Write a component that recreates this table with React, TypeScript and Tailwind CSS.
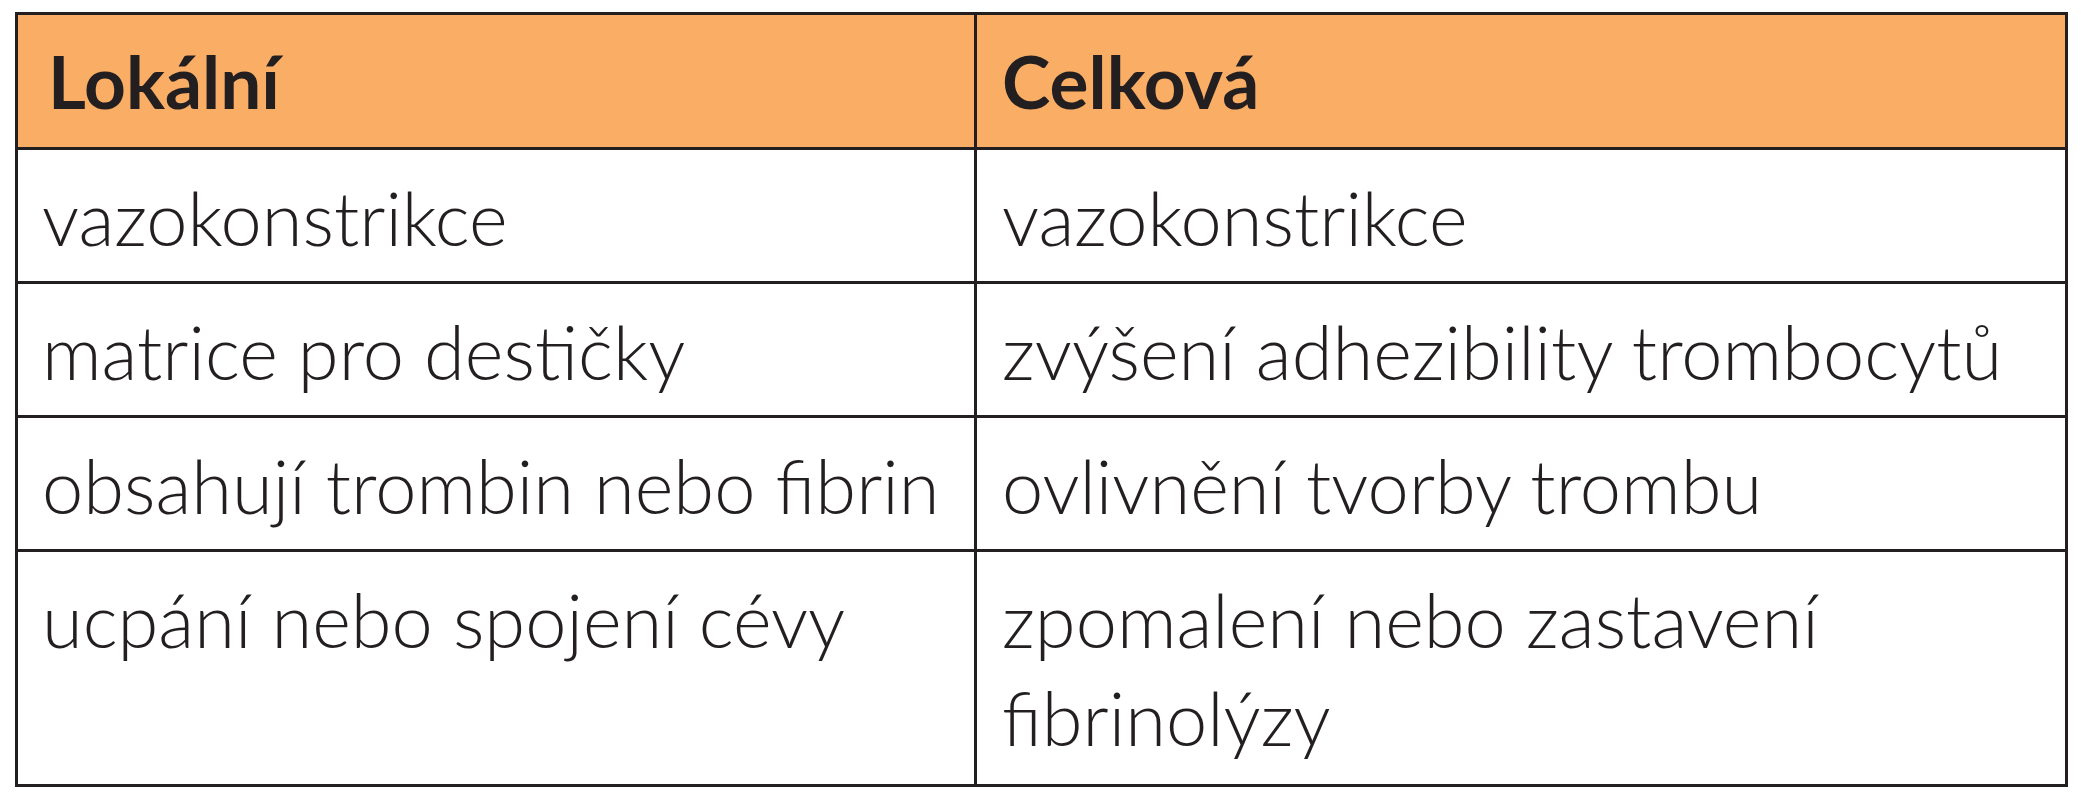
import React from "react";

const rows: [React.ReactNode, React.ReactNode][] = [
  ["vazokonstrikce", "vazokonstrikce"],
  ["matrice pro destičky", "zvýšení adhezibility trombocytů"],
  ["obsahují trombin nebo fibrin", "ovlivnění tvorby trombu"],
  [
    "ucpání nebo spojení cévy",
    <>
      zpomalení nebo zastavení
      <br />
      fibrinolýzy
    </>,
  ],
];

export default function App() {
  return (
    <div className="w-[2083px] h-[800px] bg-white pt-[12px] pl-[15px]">
      <div
        className="grid grid-cols-[956px_1088px] gap-[3px] bg-[#231f20] p-[3px] w-[2053px] text-[#231f20]"
        style={{ fontFamily: "Lato, 'Open Sans', sans-serif" }}
      >
        <div className="bg-[#f9ad65] pl-[30px] pt-[17px] pb-[17px] text-[73px] leading-[98px] font-bold">
          Lokální
        </div>
        <div className="bg-[#f9ad65] pl-[25px] pt-[17px] pb-[17px] text-[73px] leading-[98px] font-bold">
          Celková
        </div>
        {rows.map(([a, b], i) => (
          <React.Fragment key={i}>
            <div
              className={
                "bg-white pl-[24px] pt-[19px] text-[74px] leading-[98px] font-light " +
                (i === 3 ? "pb-[17px]" : "pb-[14px]")
              }
            >
              {a}
            </div>
            <div
              className={
                "bg-white pl-[25px] pt-[19px] text-[74px] leading-[98px] font-light " +
                (i === 3 ? "pb-[17px]" : "pb-[14px]")
              }
            >
              {b}
            </div>
          </React.Fragment>
        ))}
      </div>
    </div>
  );
}
